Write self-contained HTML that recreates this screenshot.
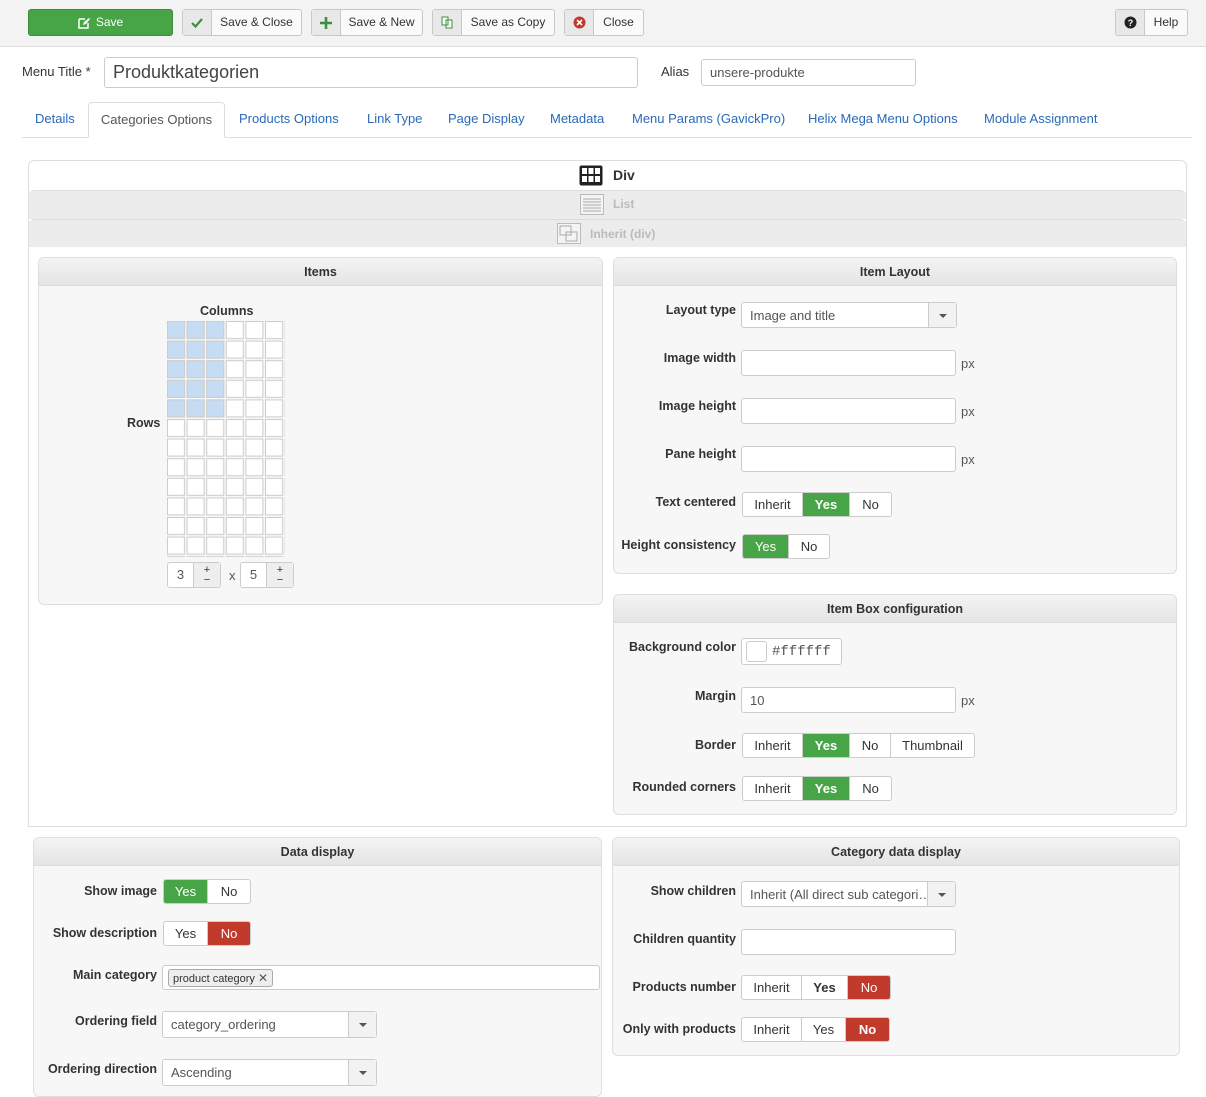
<!DOCTYPE html>
<html><head><meta charset="utf-8">
<style>
*{box-sizing:border-box;margin:0;padding:0}
body{width:1206px;height:1080px;overflow:hidden;background:#fff;font-family:"Liberation Sans",sans-serif;font-size:13px;color:#333;position:relative}
.a{position:absolute}
.tb{left:0;top:0;width:1206px;height:47px;background:#f3f3f3;border-bottom:1px solid #ddd}
.btn{position:absolute;top:9px;height:27px;border:1px solid #c8c8c8;border-radius:3px;background:#fafafa;font-size:12px;line-height:25px;color:#333;display:flex}
.btn .ic{width:29px;background:#e8e8e8;border-right:1px solid #c8c8c8;display:flex;align-items:center;justify-content:center}
.btn .t{flex:1;text-align:center}
.inp{position:absolute;background:#fff;border:1px solid #ccc;border-radius:3px;font-size:13px;color:#555;padding-left:8px;display:flex;align-items:center}
.tab{position:absolute;top:102px;height:36px;line-height:34px;font-size:13px;color:#2a69b8}
.pan{position:absolute;background:#f7f7f7;border:1px solid #dedede;border-radius:6px;overflow:hidden}
.ph{height:28px;background:linear-gradient(#f4f4f4,#e4e4e4);border-bottom:1px solid #ddd;text-align:center;font-weight:bold;font-size:12.5px;line-height:28px;color:#333}
.l{position:absolute;font-weight:bold;font-size:12.5px;text-align:right;color:#333}
.g{position:absolute;display:flex;height:25px;border:1px solid #ccc;border-radius:3px;overflow:hidden;background:#fff;font-size:13px}
.g span{display:flex;align-items:center;justify-content:center;border-right:1px solid #ccc;color:#333}
.g span:last-child{border-right:none}
.gr{background:#47a447;color:#fff!important;font-weight:bold}
.gr2{background:#47a447;color:#fff!important}
.rd{background:#c03b2b;color:#fff!important}
.px{position:absolute;font-size:13px;color:#555}
.sel .ar{position:absolute;right:0;top:0;bottom:0;width:28px;background:#f2f2f2;border-left:1px solid #ccc}
.sel .ar:after{content:"";position:absolute;left:10px;top:11px;border:4px solid transparent;border-top:4px solid #555}
</style></head><body>
<div class="a tb"></div>
<div class="btn" style="left:28px;width:145px;background:#47a447;border-color:#3d8b3d;color:#fff;justify-content:center"><svg width="12" height="12" style="margin:7px 6px 0 0"><path d="M1 2h6M1 2v9h9V6" stroke="#fff" stroke-width="1.5" fill="none"/><path d="M5 8l1-3 5-4 1 1-4 5z" fill="#fff"/></svg>Save</div>
<div class="btn" style="left:182px;width:120px"><span class="ic"><svg width="12" height="12"><path d="M1 6l3.5 3.5L11 2" stroke="#3c8f3c" stroke-width="2.2" fill="none"/></svg></span><span class="t">Save &amp; Close</span></div>
<div class="btn" style="left:311px;width:112px"><span class="ic"><svg width="12" height="12"><path d="M6 0v12M0 6h12" stroke="#3c8f3c" stroke-width="2.6"/></svg></span><span class="t">Save &amp; New</span></div>
<div class="btn" style="left:432px;width:123px"><span class="ic"><svg width="13" height="13"><path d="M1 1h6v8H1zM5 4h6v8H5z" stroke="#3c8f3c" fill="#fff" stroke-width="1"/></svg></span><span class="t">Save as Copy</span></div>
<div class="btn" style="left:564px;width:80px"><span class="ic"><svg width="13" height="13"><circle cx="6.5" cy="6.5" r="6" fill="#c0392b"/><path d="M4 4l5 5M9 4l-5 5" stroke="#fff" stroke-width="1.6"/></svg></span><span class="t">Close</span></div>
<div class="btn" style="left:1115px;width:73px"><span class="ic"><svg width="13" height="13"><circle cx="6.5" cy="6.5" r="6" fill="#222"/><text x="6.5" y="10" font-size="9" font-weight="bold" fill="#fff" text-anchor="middle" font-family="Liberation Sans">?</text></svg></span><span class="t">Help</span></div>

<div class="a" style="left:22px;top:64px;font-size:13px">Menu Title *</div>
<div class="inp" style="left:104px;top:57px;width:534px;height:31px;font-size:18px;color:#444">Produktkategorien</div>
<div class="a" style="left:661px;top:64px;font-size:13px">Alias</div>
<div class="inp" style="left:701px;top:59px;width:215px;height:27px;font-size:13px">unsere-produkte</div>

<div class="a" style="left:22px;top:137px;width:1170px;height:1px;background:#ddd"></div>
<div class="tab" style="left:35px">Details</div>
<div class="tab" style="left:88px;width:137px;background:#fff;border:1px solid #ddd;border-bottom-color:#fff;border-radius:4px 4px 0 0;color:#555;text-align:center">Categories Options</div>
<div class="tab" style="left:239px">Products Options</div>
<div class="tab" style="left:367px">Link Type</div>
<div class="tab" style="left:448px">Page Display</div>
<div class="tab" style="left:550px">Metadata</div>
<div class="tab" style="left:632px">Menu Params (GavickPro)</div>
<div class="tab" style="left:808px">Helix Mega Menu Options</div>
<div class="tab" style="left:984px">Module Assignment</div>

<div class="a" style="left:28px;top:160px;width:1159px;height:667px;border:1px solid #ddd;border-radius:6px 6px 0 0;background:#fff"></div>
<div class="a" style="left:29px;top:190px;width:1157px;height:29px;background:#ececec;border-top:1px solid #ddd;border-radius:6px 6px 0 0"></div>
<div class="a" style="left:29px;top:219px;width:1157px;height:28px;background:#ececec;border-top:1px solid #ddd;border-radius:6px 6px 0 0"></div>
<svg class="a" style="left:579px;top:165px" width="24" height="21"><rect x="0.5" y="0.5" width="23" height="20" rx="2" fill="#222"/><g fill="#fff"><rect x="3" y="3" width="5" height="6"/><rect x="9.5" y="3" width="5" height="6"/><rect x="16" y="3" width="5" height="6"/><rect x="3" y="11" width="5" height="6"/><rect x="9.5" y="11" width="5" height="6"/><rect x="16" y="11" width="5" height="6"/></g></svg>
<div class="a" style="left:613px;top:167px;font-weight:bold;font-size:14px">Div</div>
<svg class="a" style="left:580px;top:194px" width="24" height="21"><rect x="0.5" y="0.5" width="23" height="20" fill="#f4f4f4" stroke="#bbb"/><path d="M3 5h18M3 8h18M3 11h18M3 14h18M3 17h18" stroke="#aaa"/></svg>
<div class="a" style="left:613px;top:197px;font-weight:bold;font-size:12px;color:#bbb">List</div>
<svg class="a" style="left:557px;top:223px" width="24" height="21"><rect x="0.5" y="0.5" width="23" height="20" fill="#f4f4f4" stroke="#bbb"/><rect x="3" y="3" width="11" height="9" fill="none" stroke="#aaa"/><rect x="9" y="9" width="11" height="9" fill="none" stroke="#aaa"/></svg>
<div class="a" style="left:590px;top:227px;font-weight:bold;font-size:12px;color:#bbb">Inherit (div)</div>

<!-- Items -->
<div class="pan" style="left:38px;top:257px;width:565px;height:348px"><div class="ph">Items</div></div>
<div class="a" style="left:200px;top:304px;font-weight:bold;font-size:12.5px">Columns</div>
<div class="a" style="left:127px;top:416px;font-weight:bold;font-size:12.5px">Rows</div>
<svg class="a" style="left:167px;top:321px" width="118" height="236">
<defs><pattern id="p" width="19.6" height="19.6" patternUnits="userSpaceOnUse"><rect x="0.5" y="0.5" width="17" height="17" fill="#fff" stroke="#ccc"/></pattern>
<pattern id="q" width="19.6" height="19.6" patternUnits="userSpaceOnUse"><rect x="0.5" y="0.5" width="17" height="17" fill="#c6dcf3" stroke="#ccc"/></pattern></defs>
<rect width="118" height="236" fill="url(#p)"/><rect width="58.8" height="98" fill="url(#q)"/></svg>
<div class="a" style="left:167px;top:562px;width:54px;height:26px;border:1px solid #ccc;border-radius:3px;background:#fff;display:flex"><span style="flex:1;text-align:center;line-height:24px;color:#555">3</span><span style="width:27px;background:#eee;border-left:1px solid #ccc;font-size:11px;line-height:10px;text-align:center;padding-top:2px">+<br>−</span></div>
<div class="a" style="left:229px;top:568px;color:#555">x</div>
<div class="a" style="left:240px;top:562px;width:54px;height:26px;border:1px solid #ccc;border-radius:3px;background:#fff;display:flex"><span style="flex:1;text-align:center;line-height:24px;color:#555">5</span><span style="width:27px;background:#eee;border-left:1px solid #ccc;font-size:11px;line-height:10px;text-align:center;padding-top:2px">+<br>−</span></div>

<!-- Item Layout -->
<div class="pan" style="left:613px;top:257px;width:564px;height:317px"><div class="ph">Item Layout</div></div>
<div class="l" style="left:613px;width:123px;top:303px">Layout type</div>
<div class="inp sel" style="left:741px;top:302px;width:216px;height:26px">Image and title<span class="ar"></span></div>
<div class="l" style="left:613px;width:123px;top:351px">Image width</div>
<div class="inp" style="left:741px;top:350px;width:215px;height:26px"></div><div class="px" style="left:961px;top:356px">px</div>
<div class="l" style="left:613px;width:123px;top:399px">Image height</div>
<div class="inp" style="left:741px;top:398px;width:215px;height:26px"></div><div class="px" style="left:961px;top:404px">px</div>
<div class="l" style="left:613px;width:123px;top:447px">Pane height</div>
<div class="inp" style="left:741px;top:446px;width:215px;height:26px"></div><div class="px" style="left:961px;top:452px">px</div>
<div class="l" style="left:613px;width:123px;top:495px">Text centered</div>
<div class="g" style="left:742px;top:492px"><span style="width:60px">Inherit</span><span class="gr" style="width:47px">Yes</span><span style="width:41px">No</span></div>
<div class="l" style="left:613px;width:123px;top:538px">Height consistency</div>
<div class="g" style="left:742px;top:534px"><span class="gr2" style="width:46px">Yes</span><span style="width:40px">No</span></div>

<!-- Item Box -->
<div class="pan" style="left:613px;top:594px;width:564px;height:221px"><div class="ph">Item Box configuration</div></div>
<div class="l" style="left:613px;width:123px;top:640px">Background color</div>
<div class="inp" style="left:741px;top:638px;width:101px;height:27px;padding-left:4px;font-family:'Liberation Mono',monospace;font-size:14px"><span style="width:21px;height:21px;border:1px solid #ccc;border-radius:3px;margin-right:5px"></span>#ffffff</div>
<div class="l" style="left:613px;width:123px;top:689px">Margin</div>
<div class="inp" style="left:741px;top:687px;width:215px;height:26px">10</div><div class="px" style="left:961px;top:693px">px</div>
<div class="l" style="left:613px;width:123px;top:738px">Border</div>
<div class="g" style="left:742px;top:733px"><span style="width:60px">Inherit</span><span class="gr" style="width:47px">Yes</span><span style="width:41px">No</span><span style="width:83px">Thumbnail</span></div>
<div class="l" style="left:613px;width:123px;top:780px">Rounded corners</div>
<div class="g" style="left:742px;top:776px"><span style="width:60px">Inherit</span><span class="gr" style="width:47px">Yes</span><span style="width:41px">No</span></div>

<!-- Data display -->
<div class="pan" style="left:33px;top:837px;width:569px;height:260px"><div class="ph">Data display</div></div>
<div class="l" style="left:33px;width:124px;top:884px">Show image</div>
<div class="g" style="left:163px;top:879px"><span class="gr2" style="width:44px">Yes</span><span style="width:42px">No</span></div>
<div class="l" style="left:33px;width:124px;top:926px">Show description</div>
<div class="g" style="left:163px;top:921px"><span style="width:44px">Yes</span><span class="rd" style="width:42px">No</span></div>
<div class="l" style="left:33px;width:124px;top:968px">Main category</div>
<div class="inp" style="left:162px;top:965px;width:438px;height:25px;padding-left:5px"><span style="border:1px solid #aaa;border-radius:3px;background:#eee;font-size:11px;padding:1px 4px;color:#333">product category <span style="font-size:12px;color:#555">✕</span></span></div>
<div class="l" style="left:33px;width:124px;top:1014px">Ordering field</div>
<div class="inp sel" style="left:162px;top:1011px;width:215px;height:27px">category_ordering<span class="ar"></span></div>
<div class="l" style="left:33px;width:124px;top:1062px">Ordering direction</div>
<div class="inp sel" style="left:162px;top:1059px;width:215px;height:27px">Ascending<span class="ar"></span></div>

<!-- Category data display -->
<div class="pan" style="left:612px;top:837px;width:568px;height:219px"><div class="ph">Category data display</div></div>
<div class="l" style="left:612px;width:124px;top:884px">Show children</div>
<div class="inp sel" style="left:741px;top:881px;width:215px;height:26px">Inherit (All direct sub categori…<span class="ar"></span></div>
<div class="l" style="left:612px;width:124px;top:932px">Children quantity</div>
<div class="inp" style="left:741px;top:929px;width:215px;height:26px"></div>
<div class="l" style="left:612px;width:124px;top:980px">Products number</div>
<div class="g" style="left:741px;top:975px"><span style="width:60px">Inherit</span><span style="width:46px;font-weight:bold">Yes</span><span class="rd" style="width:42px">No</span></div>
<div class="l" style="left:612px;width:124px;top:1022px">Only with products</div>
<div class="g" style="left:741px;top:1017px"><span style="width:60px">Inherit</span><span style="width:44px">Yes</span><span class="rd" style="width:43px;font-weight:bold">No</span></div>
</body></html>
